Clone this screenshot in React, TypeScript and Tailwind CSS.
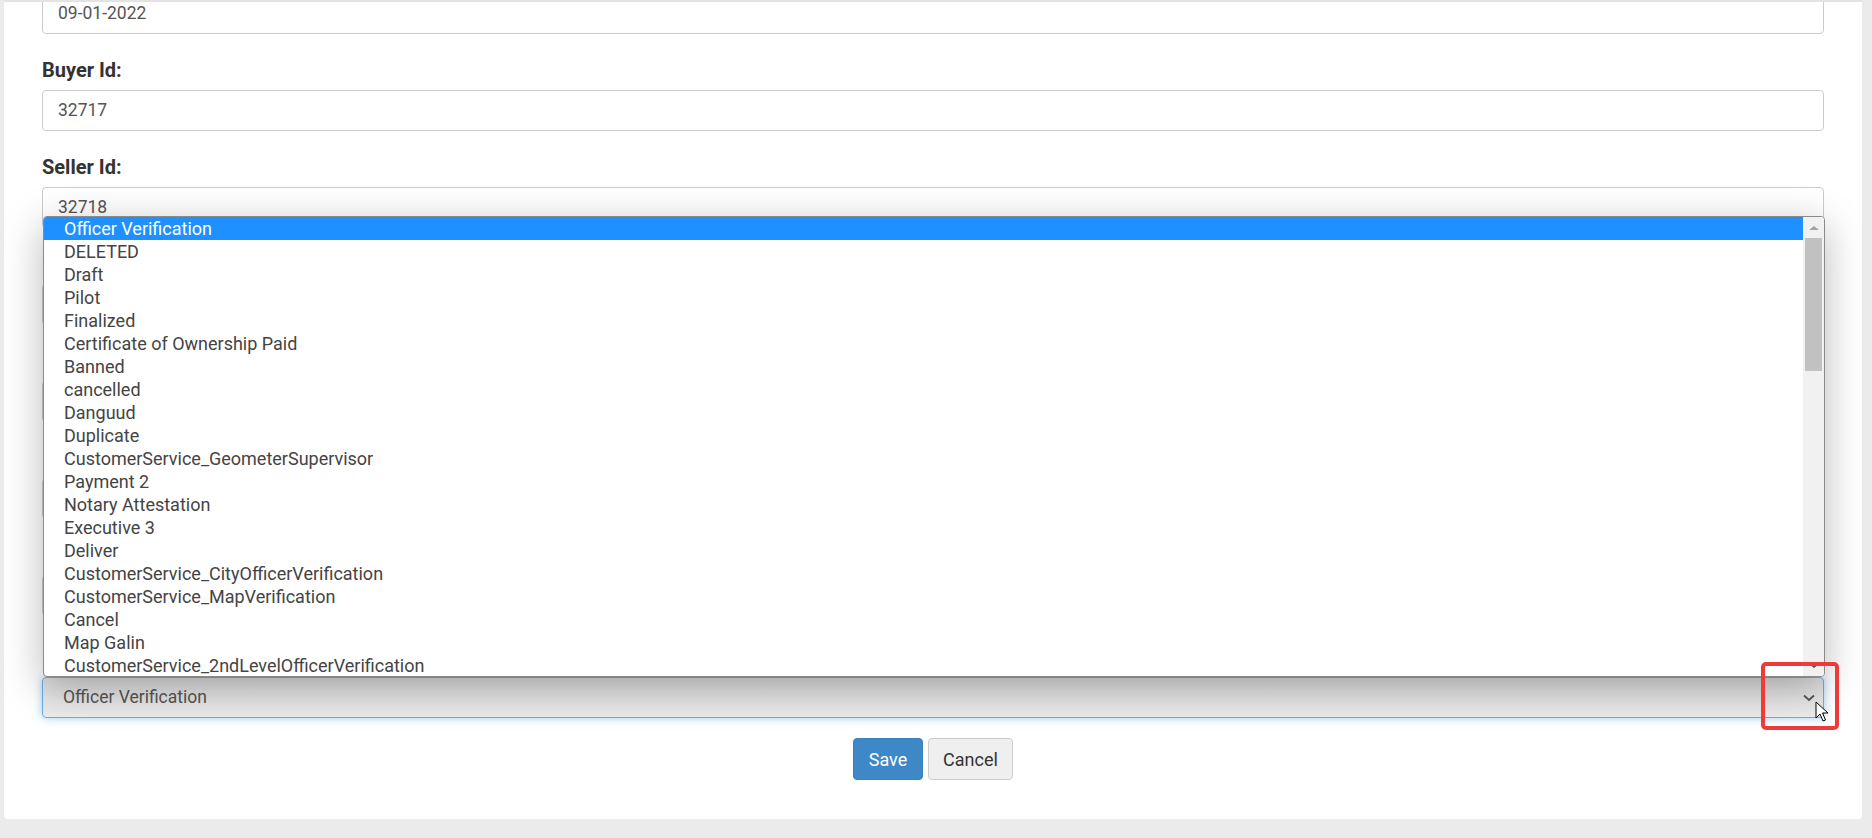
import React from "react";

const fields = [
  { label: "", value: "09-01-2022" },
  { label: "Buyer Id:", value: "32717" },
  { label: "Seller Id:", value: "32718" },
  { label: "", value: "" },
  { label: "", value: "" },
  { label: "", value: "" },
  { label: "", value: "" },
];

const options = [
  "Officer Verification",
  "DELETED",
  "Draft",
  "Pilot",
  "Finalized",
  "Certificate of Ownership Paid",
  "Banned",
  "cancelled",
  "Danguud",
  "Duplicate",
  "CustomerService_GeometerSupervisor",
  "Payment 2",
  "Notary Attestation",
  "Executive 3",
  "Deliver",
  "CustomerService_CityOfficerVerification",
  "CustomerService_MapVerification",
  "Cancel",
  "Map Galin",
  "CustomerService_2ndLevelOfficerVerification",
];

function TextInput({ value }: { value: string }) {
  return (
    <div className="h-[41px] w-full rounded-[4px] border border-[#cccccc] bg-white px-[15px] flex items-center text-[17.5px] text-[#555555]">
      {value}
    </div>
  );
}

function DropdownList() {
  return (
    <div className="absolute left-[39px] top-[214px] w-[1782px] h-[461px] bg-white border border-[#8a8a8a] rounded-[4px] shadow-[0_10px_40px_rgba(0,0,0,0.28)] flex overflow-hidden z-10">
      <div className="flex-1 flex flex-col">
        {options.map((opt, i) => (
          <div
            key={opt}
            className={
              i === 0
                ? "h-[23px] shrink-0 pl-[20px] flex items-center text-[18px] bg-[#1e90ff] text-white"
                : "h-[23px] shrink-0 pl-[20px] flex items-center text-[18px] text-[#444444]"
            }
          >
            {opt}
          </div>
        ))}
      </div>
      <div className="w-[21px] bg-[#f1f1f1] flex flex-col items-center">
        <div className="h-[21px] flex items-center justify-center">
          <div className="w-0 h-0 border-l-[5px] border-r-[5px] border-b-[4px] border-l-transparent border-r-transparent border-b-[#a3a3a3]" />
        </div>
        <div className="w-[17px] h-[133px] bg-[#c1c1c1]" />
        <div className="flex-1" />
        <div className="h-[21px] flex items-center justify-center">
          <div className="w-0 h-0 border-l-[5px] border-r-[5px] border-t-[4px] border-l-transparent border-r-transparent border-t-[#505050]" />
        </div>
      </div>
    </div>
  );
}

export default function App() {
  return (
    <div
      className="w-full h-[838px] overflow-hidden bg-[#ebebeb] pl-[4px] pr-[10px]"
      style={{ fontFamily: "Roboto, 'Liberation Sans', sans-serif" }}
    >
      <div className="relative w-[1858px] h-[819px] bg-white rounded-b-[4px] border-t-[2px] border-[#e3e3e3] overflow-hidden">
        <div className="px-[38px] -mt-[9px]">
          {fields.map((f, i) => (
            <div key={i}>
              {i > 0 && (
                <div className="pt-[22px] pb-[6px]">
                  <div className="h-[28px] flex items-center text-[20px] font-bold text-[#333333]">
                    {f.label}
                  </div>
                </div>
              )}
              <TextInput value={f.value} />
            </div>
          ))}
          <div className="pt-[22px] pb-[11px]">
            <div className="h-[28px]" />
          </div>
          <div className="relative h-[41px] w-full rounded-[4px] border border-[#66afe9] bg-gradient-to-b from-[#dedede] to-[#ececec] shadow-[0_0_8px_rgba(102,175,233,0.6)] px-[20px] flex items-center text-[17.5px] text-[#555555]">
            <span className="flex-1">Officer Verification</span>
            <svg width="12" height="8" viewBox="0 0 12 8" className="mr-[-12px]">
              <path d="M1 1.5 L6 6 L11 1.5" fill="none" stroke="#555555" strokeWidth="1.8" />
            </svg>
          </div>
          <div className="pt-[20px] flex justify-center gap-[5px]">
            <button className="h-[42px] w-[70px] rounded-[4px] bg-[#3f88c8] border border-[#3a80bd] text-white text-[18px]">
              Save
            </button>
            <button className="h-[42px] w-[85px] rounded-[4px] bg-[#efefef] border border-[#cccccc] text-[#333333] text-[18px]">
              Cancel
            </button>
          </div>
        </div>
        <DropdownList />
        <div className="absolute left-[1757px] top-[660px] w-[78px] h-[68px] border-[4px] border-[#ef3a3a] rounded-[5px] z-20" />
        <svg
          className="absolute left-[1811px] top-[699px] z-30"
          width="14"
          height="22"
          viewBox="0 0 14 22"
        >
          <path
            d="M1 1 L1 17 L5 13 L8 20 L10.5 19 L7.5 12 L13 12 Z"
            fill="#ffffff"
            stroke="#000000"
            strokeWidth="1"
            strokeLinejoin="miter"
          />
        </svg>
      </div>
    </div>
  );
}
